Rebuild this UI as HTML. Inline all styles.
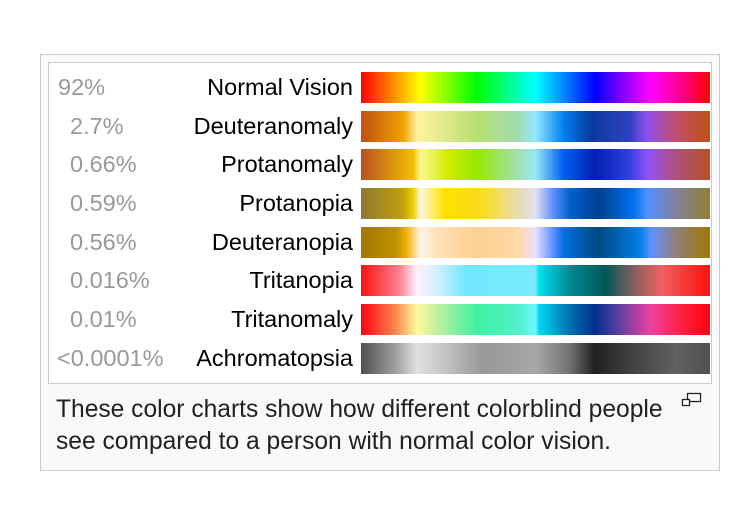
<!DOCTYPE html>
<html><head><meta charset="utf-8"><style>
body{margin:0;width:750px;height:520px;background:#fff;font-family:"Liberation Sans",Arial,sans-serif;position:relative;overflow:hidden}
.outer{position:absolute;left:40px;top:54px;width:678px;height:415px;background:#f8f9fa;border:1px solid #c8ccd1}
.inner{position:absolute;left:48px;top:62px;width:662px;height:320px;background:#fff;border:1px solid #c8ccd1}
.p{position:absolute;color:#999;font-size:23.5px;line-height:31px;white-space:nowrap}
.l{position:absolute;right:397px;color:#000;font-size:23.5px;line-height:31px;text-align:right;white-space:nowrap}
.b{position:absolute;left:361px;width:349px;height:31px}
.cap{position:absolute;left:56px;top:394px;font-size:24.6px;line-height:32px;color:#202122;white-space:nowrap}
</style></head><body>
<div class="outer"></div><div class="inner"></div>

<div class="p" style="left:58px;top:72px">92%</div><div class="l" style="top:72px">Normal Vision</div>
<div class="b" style="top:72px;background:linear-gradient(90deg,#f00 0%,#f80 9%,#ff0 17%,#0f0 33%,#0f8 42%,#0ff 50%,#08f 58%,#00f 67%,#80f 75%,#f0f 83%,#f08 92%,#f00 100%)"></div>

<div class="p" style="left:70px;top:111px">2.7%</div><div class="l" style="top:111px">Deuteranomaly</div>
<div class="b" style="top:111px;background:linear-gradient(90deg,#c05010 0%,#f0a000 12%,#fff0a0 16%,#e8ec90 22%,#b8e070 33%,#a0dcb0 45%,#90e8ff 50%,#0080f0 58%,#0a3aa0 66%,#3040c0 77%,#9050f0 82%,#c05070 90%,#c05010 100%)"></div>

<div class="p" style="left:70px;top:149px">0.66%</div><div class="l" style="top:149px">Protanomaly</div>
<div class="b" style="top:149px;background:linear-gradient(90deg,#b85020 0%,#f0c000 15%,#fff890 17%,#d0ec00 25%,#98e800 33%,#a0e0b0 45%,#98e8f8 50%,#0060f0 58%,#0020b0 67%,#3040e0 77%,#9050f8 82%,#b05080 90%,#b85020 100%)"></div>

<div class="p" style="left:70px;top:188px">0.59%</div><div class="l" style="top:188px">Protanopia</div>
<div class="b" style="top:188px;background:linear-gradient(90deg,#907830 0%,#c0a010 12%,#f0d000 15%,#fff8e0 17%,#ffe000 24%,#f8dc20 35%,#e8dcb0 45%,#e0e0f0 50%,#6090ff 55%,#0060d0 60%,#004090 68%,#0070f0 78%,#5090ff 82%,#8080a0 90%,#908030 100%)"></div>

<div class="p" style="left:70px;top:227px">0.56%</div><div class="l" style="top:227px">Deuteranopia</div>
<div class="b" style="top:227px;background:linear-gradient(90deg,#a07800 0%,#c09000 10%,#f0b000 13%,#fff4e8 17%,#ffe0b8 22%,#ffd090 33%,#ffd8a8 45%,#e8e0ff 50%,#6090ff 55%,#0070e0 58%,#004880 68%,#0080e8 80%,#6090ff 83%,#908080 90%,#a07800 100%)"></div>

<div class="p" style="left:70px;top:265px">0.016%</div><div class="l" style="top:265px">Tritanopia</div>
<div class="b" style="top:265px;background:linear-gradient(90deg,#ff1010 0%,#ff8090 11%,#fff0ff 16%,#d0f0ff 22%,#70e8ff 30%,#78ecff 50%,#00e0f0 51%,#008890 60%,#005858 70%,#a06060 80%,#f06060 86%,#ff1010 100%)"></div>

<div class="p" style="left:70px;top:304px">0.01%</div><div class="l" style="top:304px">Tritanomaly</div>
<div class="b" style="top:304px;background:linear-gradient(90deg,#ff0010 0%,#ff8850 10%,#fff8a0 16%,#c0f0a0 22%,#40f0a0 33%,#50f0c8 45%,#70f8ff 50%,#00d8f0 51%,#0070b0 60%,#003090 67%,#7040a0 75%,#f040a0 83%,#ff2040 92%,#ff0010 100%)"></div>

<div class="p" style="left:57px;top:343px">&lt;0.0001%</div><div class="l" style="top:343px">Achromatopsia</div>
<div class="b" style="top:343px;background:linear-gradient(90deg,#505050 0%,#a0a0a0 10%,#e0e0e0 16%,#c0c0c0 25%,#989898 35%,#a8a8a8 50%,#707070 60%,#202020 67%,#404040 77%,#606060 90%,#505050 100%)"></div>

<div class="cap">These color charts show how different colorblind people<br>see compared to a person with normal color vision.</div>
<svg style="position:absolute;left:681px;top:392px" width="22" height="16" viewBox="0 0 22 16"><rect x="6.5" y="1.5" width="13" height="8" fill="#fff" stroke="#202122" stroke-width="1.3"/><rect x="1.5" y="7.5" width="7" height="6" fill="#fff" stroke="#202122" stroke-width="1.3"/></svg>
</body></html>
